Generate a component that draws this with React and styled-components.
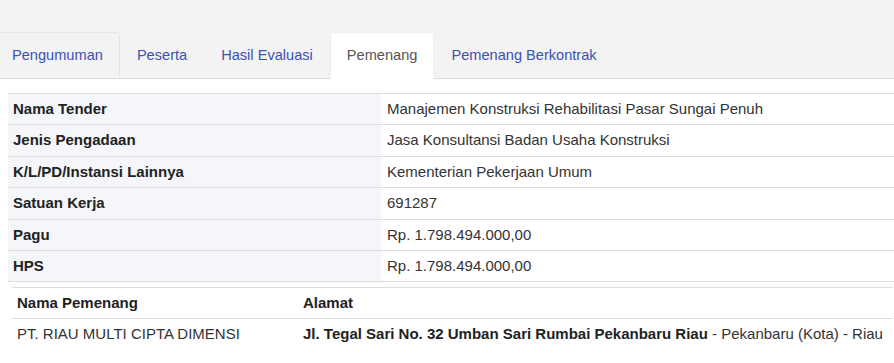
import React from "react";
import styled, { createGlobalStyle } from "styled-components";

const Colors = {
  page: "#f3f3f3",
  line: "#dddddd",
  link: "#3b51b5",
  text: "#333333",
  label: "#f4f6fa",
};

const tabs = [
  { label: "Pengumuman", outlined: true },
  { label: "Peserta" },
  { label: "Hasil Evaluasi" },
  { label: "Pemenang", active: true },
  { label: "Pemenang Berkontrak" },
];

const details = [
  ["Nama Tender", "Manajemen Konstruksi Rehabilitasi Pasar Sungai Penuh"],
  ["Jenis Pengadaan", "Jasa Konsultansi Badan Usaha Konstruksi"],
  ["K/L/PD/Instansi Lainnya", "Kementerian Pekerjaan Umum"],
  ["Satuan Kerja", "691287"],
  ["Pagu", "Rp. 1.798.494.000,00"],
  ["HPS", "Rp. 1.798.494.000,00"],
];

const App = () => {
  return (
    <>
      <GlobalStyle />
      <Header>
        <TabList>
          {tabs.map((t) => (
            <Tab key={t.label} $active={t.active} $outlined={t.outlined}>
              <TabLink href="#" $active={t.active}>{t.label}</TabLink>
            </Tab>
          ))}
        </TabList>
      </Header>
      <Content>
        <InfoTable>
          <tbody>
            {details.map(([label, value]) => (
              <tr key={label}>
                <LabelCell>{label}</LabelCell>
                <ValueCell>{value}</ValueCell>
              </tr>
            ))}
          </tbody>
        </InfoTable>
        <WinnerTable>
          <thead>
            <tr>
              <WinnerHead $first>Nama Pemenang</WinnerHead>
              <WinnerHead>Alamat</WinnerHead>
            </tr>
          </thead>
          <tbody>
            <tr>
              <WinnerCell>PT. RIAU MULTI CIPTA DIMENSI</WinnerCell>
              <WinnerCell>
                <strong>Jl. Tegal Sari No. 32 Umban Sari Rumbai Pekanbaru Riau</strong> - Pekanbaru (Kota) - Riau
              </WinnerCell>
            </tr>
          </tbody>
        </WinnerTable>
      </Content>
    </>
  );
};

const GlobalStyle = createGlobalStyle`
  body {
    margin: 0;
    background: #fff;
    font-family: "Liberation Sans", Arial, sans-serif;
    font-size: 15px;
    color: ${Colors.text};
    overflow: hidden;
  }
`;

const Header = styled.div`
  background: ${Colors.page};
  padding-top: 32px;
`;

const TabList = styled.ul`
  display: flex;
  list-style: none;
  margin: 0 0 0 -5px;
  padding: 0;
  border-bottom: 1px solid ${Colors.line};
`;

const Tab = styled.li`
  margin-bottom: -1px;
  border: 1px solid transparent;
  border-radius: 4px 4px 0 0;
  ${(p) => p.$outlined && `border-color: #e6e6e6 #e6e6e6 ${Colors.line};`}
  ${(p) => p.$active && `background: #fff; border-color: #f0f0f0 #f0f0f0 #fff;`}
`;

const TabLink = styled.a`
  display: block;
  padding: 12px 16px;
  font-size: 14.6px;
  line-height: 21px;
  text-decoration: none;
  color: ${(p) => (p.$active ? "#555" : Colors.link)};
`;

const Content = styled.div`
  padding: 14px 0 0 8px;
`;

const InfoTable = styled.table`
  width: 100%;
  border-collapse: collapse;
  border-bottom: 1px solid ${Colors.line};
  td {
    padding: 5px 5px;
    line-height: 20.4px;
    border-top: 1px solid ${Colors.line};
  }
`;

const LabelCell = styled.td`
  width: 363px;
  background: ${Colors.label};
  font-weight: bold;
  color: #222;
`;

const ValueCell = styled.td`
  background: #fff;
  padding-left: 6px !important;
`;

const WinnerTable = styled.table`
  width: calc(100% - 5px);
  margin: 5px 0 0 4px;
  border-collapse: collapse;
  border-top: 1px solid ${Colors.line};
`;

const WinnerHead = styled.th`
  text-align: left;
  padding: 5px 5px;
  line-height: 20px;
  color: #222;
  border-bottom: 1px solid ${Colors.line};
  width: ${(p) => (p.$first ? "276px" : "auto")};
`;

const WinnerCell = styled.td`
  padding: 5px 5px;
  line-height: 20px;
  white-space: nowrap;
  strong {
    color: #222;
  }
`;

export default App;
